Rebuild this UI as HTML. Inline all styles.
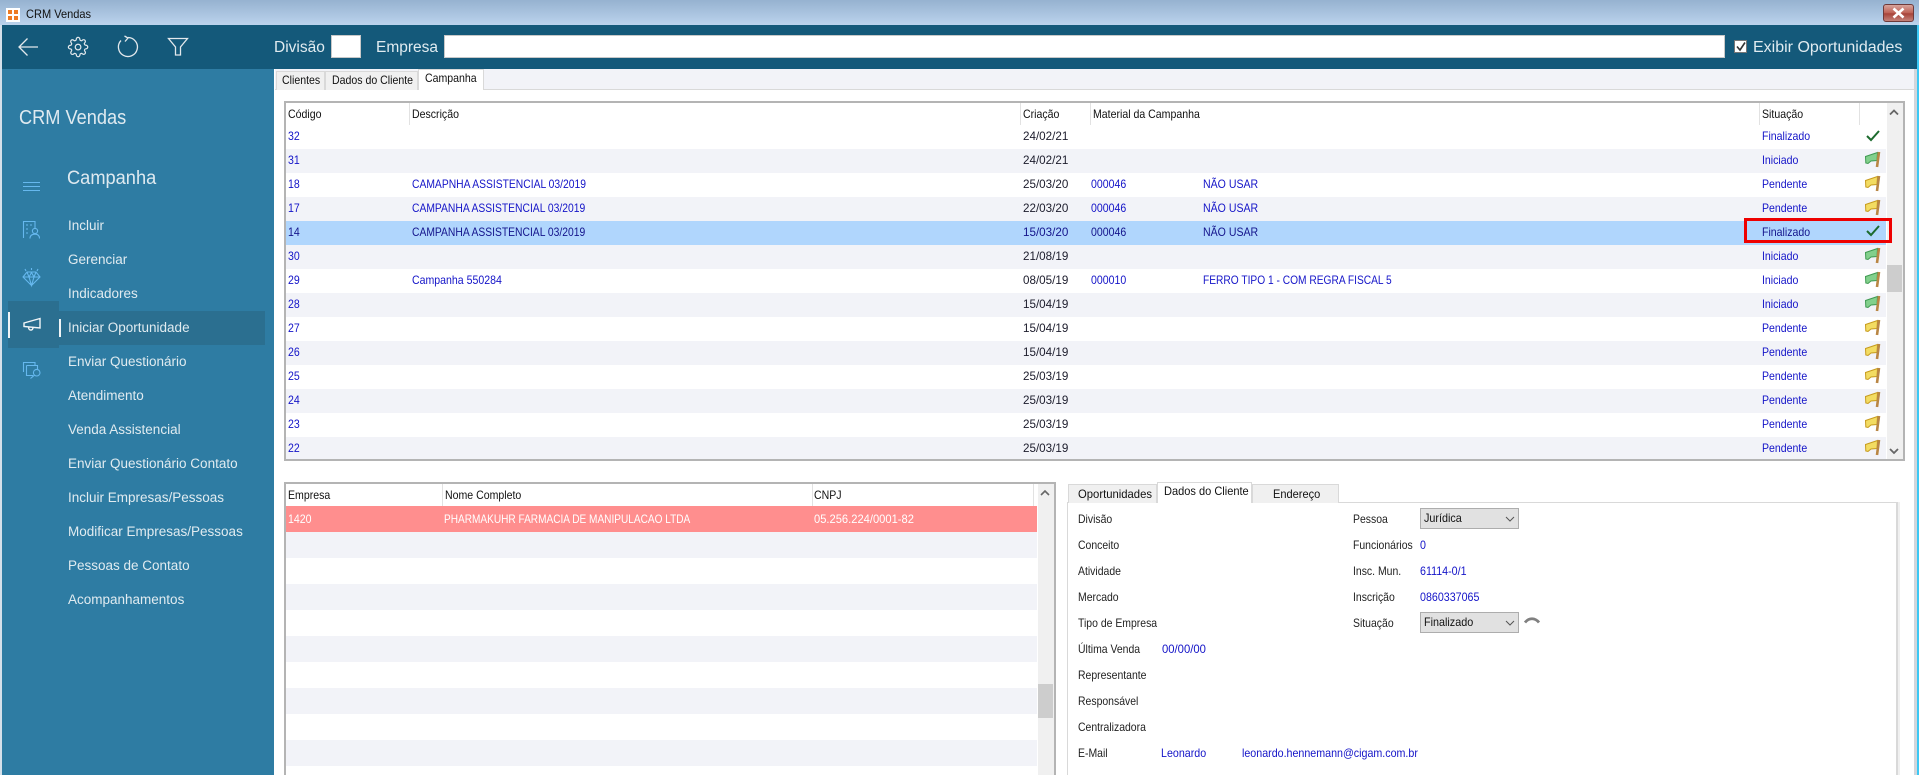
<!DOCTYPE html>
<html><head><meta charset="utf-8"><title>CRM Vendas</title>
<style>
html,body{margin:0;padding:0;width:1919px;height:775px;overflow:hidden;background:#fff;font-family:"Liberation Sans",sans-serif;font-size:12px;color:#111}
.b{position:absolute}
.a{position:absolute;white-space:nowrap}
.g{position:absolute;white-space:nowrap;transform:scaleX(.88);transform-origin:0 0}
.m{left:68px;color:#e0ebf0;font-size:13.5px;line-height:20px}
.r{position:absolute;left:286px;width:1600px;height:24px;line-height:22px;color:#1414c8}
.w{background:#fff}.z{background:#f2f3f8}
.c0{left:2px}.c1{left:126px}.c2{left:737px;color:#1c1c2c;transform:scaleX(.97)}.c3{left:805px}.c4{left:917px}.c5{left:1476px}
.h{top:106px;line-height:16px;color:#111}
.sep{position:absolute;width:1px;background:#e2e2e2}
.tab{position:absolute;box-sizing:border-box;border:1px solid #d9d9d9;border-bottom:none;background:#f0f0f0;line-height:17px;color:#111}
.tab span{position:absolute;white-space:nowrap;transform:scaleX(.88);transform-origin:0 0}
.l{position:absolute;left:1078px;line-height:16px;color:#222;white-space:nowrap;transform:scaleX(.87);transform-origin:0 0}
.v{position:absolute;line-height:16px;color:#1414c8;white-space:nowrap;transform:scaleX(.89);transform-origin:0 0}
.sel{position:absolute;left:1420px;width:99px;height:21px;box-sizing:border-box;border:1px solid #adadad;background:#e1e1e1;line-height:18px;color:#111}
.sel span{position:absolute;left:3px;white-space:nowrap;transform:scaleX(.9);transform-origin:0 0}
.q{position:absolute;left:286px;width:751px;height:26px}
</style></head><body>
<div class="b" style="left:0;top:0;width:1919px;height:25px;background:linear-gradient(#96b2d0,#bbd3ed)"></div>
<div class="a" style="left:26px;top:6px;line-height:16px;color:#111;transform:scaleX(.92);transform-origin:0 0">CRM Vendas</div>
<div class="b" style="left:0;top:25px;width:2px;height:750px;background:#d5e0ea"></div>
<div class="b" style="left:2px;top:25px;width:1915px;height:44px;background:#14597a"></div>
<div class="b" style="left:2px;top:69px;width:272px;height:706px;background:#2e7ca3"></div>
<div class="b" style="left:275px;top:69px;width:1639px;height:20px;background:#f2f3f8"></div>
<div class="b" style="left:275px;top:89px;width:1639px;height:1px;background:#d9d9d9"></div>
<div class="b" style="left:1914px;top:69px;width:3px;height:706px;background:#d2d6dc"></div>
<div class="b" style="left:1917px;top:25px;width:2px;height:750px;background:#3cc8f4"></div>

<div class="b" style="left:1883px;top:4px;width:31px;height:18px;box-sizing:border-box;border:1px solid #6e3a3a;border-radius:3px;background:linear-gradient(#d8a49c,#bf6458 48%,#a8443a 55%,#c4827a)"></div>

<div class="a" style="left:274px;top:38px;line-height:20px;font-size:15.5px;color:#e0ebf0">Divisão</div>
<div class="b" style="left:331px;top:35px;width:30px;height:23px;background:#fff;box-sizing:border-box;border:1px solid #c8c8c8"></div>
<div class="a" style="left:376px;top:38px;line-height:20px;font-size:15.5px;color:#e0ebf0">Empresa</div>
<div class="b" style="left:444px;top:35px;width:1281px;height:23px;background:#fff;box-sizing:border-box;border:1px solid #c8c8c8"></div>
<div class="b" style="left:1734px;top:40px;width:13px;height:13px;background:#fff;box-sizing:border-box;border:1px solid #777"></div>
<div class="a" style="left:1753px;top:38px;line-height:20px;font-size:16px;color:#e0ebf0">Exibir Oportunidades</div>

<div class="a" style="left:19px;top:106px;font-size:20px;line-height:24px;color:#dfeaf0;transform:scaleX(.91);transform-origin:0 0">CRM Vendas</div>
<div class="a" style="left:67px;top:167px;font-size:19px;line-height:24px;color:#dfeaf0;transform:scaleX(.96);transform-origin:0 0">Campanha</div>
<div class="b" style="left:8px;top:301px;width:51px;height:47px;background:#2b6f90"></div>
<div class="b" style="left:59px;top:311px;width:206px;height:34px;background:#2b6f90"></div>
<div class="b" style="left:8px;top:312px;width:1.5px;height:26px;background:#f0f4f6"></div>
<div class="b" style="left:59px;top:319px;width:1.5px;height:18px;background:#f0f4f6"></div>
<div class="a m" style="top:216px">Incluir</div>
<div class="a m" style="top:250px">Gerenciar</div>
<div class="a m" style="top:284px">Indicadores</div>
<div class="a m" style="top:318px">Iniciar Oportunidade</div>
<div class="a m" style="top:352px">Enviar Questionário</div>
<div class="a m" style="top:386px">Atendimento</div>
<div class="a m" style="top:420px">Venda Assistencial</div>
<div class="a m" style="top:454px">Enviar Questionário Contato</div>
<div class="a m" style="top:488px">Incluir Empresas/Pessoas</div>
<div class="a m" style="top:522px">Modificar Empresas/Pessoas</div>
<div class="a m" style="top:556px">Pessoas de Contato</div>
<div class="a m" style="top:590px">Acompanhamentos</div>

<div class="tab" style="left:276px;top:71px;width:49px;height:19px"><span style="left:5px;top:0">Clientes</span></div>
<div class="tab" style="left:325px;top:71px;width:93px;height:19px"><span style="left:6px;top:0">Dados do Cliente</span></div>
<div class="tab" style="left:418px;top:69px;width:66px;height:21px;background:#fff"><span style="left:6px;top:0">Campanha</span></div>

<div class="b" style="left:284px;top:101px;width:1621px;height:360px;box-sizing:border-box;border:2px solid #b4b4b4"></div>
<div class="b" style="left:1887px;top:103px;width:16px;height:356px;background:#f0f0f0"></div>
<div class="b" style="left:1887px;top:265px;width:15px;height:27px;background:#cdcdcd"></div>
<div class="g h" style="left:288px">Código</div>
<div class="g h" style="left:412px">Descrição</div>
<div class="g h" style="left:1023px">Criação</div>
<div class="g h" style="left:1093px">Material da Campanha</div>
<div class="g h" style="left:1762px">Situação</div>
<div class="sep" style="left:409px;top:103px;height:22px"></div>
<div class="sep" style="left:1020px;top:103px;height:22px"></div>
<div class="sep" style="left:1090px;top:103px;height:22px"></div>
<div class="sep" style="left:1759px;top:103px;height:22px"></div>
<div class="sep" style="left:1859px;top:103px;height:22px"></div>

<div class="r w" style="top:125px"><span class="g c0">32</span><span class="g c2">24/02/21</span><span class="g c5">Finalizado</span></div>
<div class="r z" style="top:149px"><span class="g c0">31</span><span class="g c2">24/02/21</span><span class="g c5">Iniciado</span></div>
<div class="r w" style="top:173px"><span class="g c0">18</span><span class="g c1" style="transform:scaleX(.86)">CAMAPNHA ASSISTENCIAL 03/2019</span><span class="g c2">25/03/20</span><span class="g c3">000046</span><span class="g c4">NÃO USAR</span><span class="g c5">Pendente</span></div>
<div class="r z" style="top:197px"><span class="g c0">17</span><span class="g c1" style="transform:scaleX(.86)">CAMPANHA ASSISTENCIAL 03/2019</span><span class="g c2">22/03/20</span><span class="g c3">000046</span><span class="g c4">NÃO USAR</span><span class="g c5">Pendente</span></div>
<div class="r" style="top:221px;background:#b0d6fd;color:#14148c"><span class="g c0">14</span><span class="g c1" style="transform:scaleX(.86)">CAMPANHA ASSISTENCIAL 03/2019</span><span class="g c2" style="color:#14148c">15/03/20</span><span class="g c3">000046</span><span class="g c4">NÃO USAR</span><span class="g c5">Finalizado</span></div>
<div class="r z" style="top:245px"><span class="g c0">30</span><span class="g c2">21/08/19</span><span class="g c5">Iniciado</span></div>
<div class="r w" style="top:269px"><span class="g c0">29</span><span class="g c1">Campanha 550284</span><span class="g c2">08/05/19</span><span class="g c3">000010</span><span class="g c4" style="transform:scaleX(.85)">FERRO TIPO 1 - COM REGRA FISCAL 5</span><span class="g c5">Iniciado</span></div>
<div class="r z" style="top:293px"><span class="g c0">28</span><span class="g c2">15/04/19</span><span class="g c5">Iniciado</span></div>
<div class="r w" style="top:317px"><span class="g c0">27</span><span class="g c2">15/04/19</span><span class="g c5">Pendente</span></div>
<div class="r z" style="top:341px"><span class="g c0">26</span><span class="g c2">15/04/19</span><span class="g c5">Pendente</span></div>
<div class="r w" style="top:365px"><span class="g c0">25</span><span class="g c2">25/03/19</span><span class="g c5">Pendente</span></div>
<div class="r z" style="top:389px"><span class="g c0">24</span><span class="g c2">25/03/19</span><span class="g c5">Pendente</span></div>
<div class="r w" style="top:413px"><span class="g c0">23</span><span class="g c2">25/03/19</span><span class="g c5">Pendente</span></div>
<div class="r z" style="top:437px;height:22px"><span class="g c0">22</span><span class="g c2">25/03/19</span><span class="g c5">Pendente</span></div>

<div class="b" style="left:1744px;top:218px;width:148px;height:25px;box-sizing:border-box;border:3px solid #ee0000"></div>

<div class="b" style="left:284px;top:482px;width:772px;height:293px;box-sizing:border-box;border:2px solid #b4b4b4;border-bottom:none"></div>
<div class="b" style="left:1038px;top:484px;width:16px;height:291px;background:#f0f0f0"></div>
<div class="b" style="left:1038px;top:684px;width:15px;height:34px;background:#cdcdcd"></div>
<div class="g" style="left:288px;top:487px;line-height:16px;color:#111">Empresa</div>
<div class="g" style="left:445px;top:487px;line-height:16px;color:#111">Nome Completo</div>
<div class="g" style="left:814px;top:487px;line-height:16px;color:#111">CNPJ</div>
<div class="sep" style="left:442px;top:484px;height:22px"></div>
<div class="sep" style="left:812px;top:484px;height:22px"></div>
<div class="sep" style="left:1033px;top:484px;height:22px"></div>
<div class="q" style="top:506px;background:#ff8e8e;color:#fff;line-height:26px">
<span class="g" style="left:2px">1420</span><span class="g" style="left:158px;transform:scaleX(.84)">PHARMAKUHR FARMACIA DE MANIPULACAO LTDA</span><span class="g" style="left:528px;transform:scaleX(.93)">05.256.224/0001-82</span></div>
<div class="q z" style="top:532px"></div>
<div class="q z" style="top:584px"></div>
<div class="q z" style="top:636px"></div>
<div class="q z" style="top:688px"></div>
<div class="q z" style="top:740px"></div>

<div class="b" style="left:1067px;top:502px;width:831px;height:273px;box-sizing:border-box;border:1px solid #d9d9d9;border-width:1px 2px 0 1px"></div>
<div class="b" style="left:1898px;top:502px;width:2px;height:273px;background:#f0f0f0"></div>
<div class="tab" style="left:1068px;top:484px;width:89px;height:19px"><span style="left:9px;top:1px;transform:scaleX(.94)">Oportunidades</span></div>
<div class="tab" style="left:1157px;top:482px;width:95px;height:21px;background:#fff"><span style="left:6px;top:0;transform:scaleX(.92)">Dados do Cliente</span></div>
<div class="tab" style="left:1252px;top:484px;width:87px;height:19px"><span style="left:20px;top:1px;transform:scaleX(.92)">Endereço</span></div>

<div class="l" style="top:511px">Divisão</div>
<div class="l" style="top:537px">Conceito</div>
<div class="l" style="top:563px">Atividade</div>
<div class="l" style="top:589px">Mercado</div>
<div class="l" style="top:615px">Tipo de Empresa</div>
<div class="l" style="top:641px">Última Venda</div>
<div class="l" style="top:667px">Representante</div>
<div class="l" style="top:693px">Responsável</div>
<div class="l" style="top:719px">Centralizadora</div>
<div class="l" style="top:745px">E-Mail</div>
<div class="v" style="left:1162px;top:641px;transform:scaleX(.94)">00/00/00</div>
<div class="v" style="left:1161px;top:745px">Leonardo</div>
<div class="v" style="left:1242px;top:745px">leonardo.hennemann@cigam.com.br</div>
<div class="l" style="left:1353px;top:511px">Pessoa</div>
<div class="l" style="left:1353px;top:537px">Funcionários</div>
<div class="l" style="left:1353px;top:563px">Insc. Mun.</div>
<div class="l" style="left:1353px;top:589px">Inscrição</div>
<div class="l" style="left:1353px;top:615px">Situação</div>
<div class="v" style="left:1420px;top:537px">0</div>
<div class="v" style="left:1420px;top:563px">61114-0/1</div>
<div class="v" style="left:1420px;top:589px">0860337065</div>
<div class="sel" style="top:508px"><span>Jurídica</span></div>
<div class="sel" style="top:612px"><span>Finalizado</span></div>

<svg class="b" style="left:0;top:0" width="1919" height="775" viewBox="0 0 1919 775" fill="none">
<defs>
<g id="fy"><path d="M.5 4.5L5 3L12.5 .5L12 8.5L6 9L3 11.5L.8 11Z" fill="#f3dc62" stroke="#c79b1e"/><path d="M14 0L12 15" stroke="#b98644" stroke-width="2.6"/></g>
<g id="fg"><path d="M.5 4.5L5 3L12.5 .5L12 8.5L6 9L3 11.5L.8 11Z" fill="#82d08c" stroke="#3f9a52"/><path d="M14 0L12 15" stroke="#b98644" stroke-width="2.6"/></g>
<path id="ck" d="M0 5L4 9L12 0" stroke="#1c6b2e" stroke-width="2"/>
</defs>
<rect x="6" y="8" width="14" height="14" fill="#fff"/>
<path d="M8 10h4v4h-4zM14 10h4v4h-4zM8 16h4v4h-4zM14 16h4v4h-4z" fill="#ee7a22"/>
<path d="M1893.5 8.5L1903.5 17.5M1903.5 8.5L1893.5 17.5" stroke="#fff" stroke-width="2.6"/>
<g stroke="#e2e8ec" stroke-width="1.3">
<path d="M38 47H19M27.5 38.5L19 47L27.5 55.5"/>
<g transform="translate(67.5 36.5) scale(.88)"><path stroke-width="1.4" d="M19.4 15a1.65 1.65 0 0 0 .33 1.82l.06.06a2 2 0 0 1 0 2.83 2 2 0 0 1-2.83 0l-.06-.06a1.65 1.65 0 0 0-1.82-.33 1.65 1.65 0 0 0-1 1.51V21a2 2 0 0 1-2 2 2 2 0 0 1-2-2v-.09A1.65 1.65 0 0 0 9 19.4a1.65 1.65 0 0 0-1.82.33l-.06.06a2 2 0 0 1-2.83 0 2 2 0 0 1 0-2.83l.06-.06a1.65 1.65 0 0 0 .33-1.82 1.65 1.65 0 0 0-1.51-1H3a2 2 0 0 1-2-2 2 2 0 0 1 2-2h.09A1.65 1.65 0 0 0 4.6 9a1.65 1.65 0 0 0-.33-1.82l-.06-.06a2 2 0 0 1 0-2.83 2 2 0 0 1 2.83 0l.06.06a1.65 1.65 0 0 0 1.82.33H9a1.65 1.65 0 0 0 1-1.51V3a2 2 0 0 1 2-2 2 2 0 0 1 2 2v.09a1.65 1.65 0 0 0 1 1.51 1.65 1.65 0 0 0 1.82-.33l.06-.06a2 2 0 0 1 2.83 0 2 2 0 0 1 0 2.83l-.06.06a1.65 1.65 0 0 0-.33 1.82V9a1.65 1.65 0 0 0 1.51 1H21a2 2 0 0 1 2 2 2 2 0 0 1-2 2h-.09a1.65 1.65 0 0 0-1.51 1z"/><circle cx="12" cy="12" r="3.2" stroke-width="1.4"/></g>
<path d="M128 37.5A9.5 9.5 0 1 1 121 40.5M124.5 36L128 38L125 41.5"/>
<path d="M168.5 38.5H187.5L180.5 47V55H175.5V47Z"/>
</g>
<path d="M1737 46.5L1740 50L1745 42.5" stroke="#333" stroke-width="1.6"/>
<g stroke="#66b8ee" stroke-width="1.1">
<path d="M23 182.5H40M23 186.5H40M23 190.5H40"/>
<path d="M23.5 238V221.5H35V228M26 225h2M30 225h2M26 229h2M26 233h2"/>
<circle cx="35" cy="231" r="2.6"/><path d="M30 238.5C30 235 32.5 234.2 35 234.2S39.5 235 39.5 238.5"/>
<path d="M27 272H36L40 277L31.5 285.5L23 277ZM23 277H40M27 272L29 277L31.5 285.5L34 277L36 272M29 277L31.5 272.5L34 277M31.5 268V270M25 269L26 271M38 269L37 271"/>
<path d="M23.5 372V362.5H35V365M26.5 365.5H37.5V369M26.5 365.5V375.5H33"/>
<circle cx="36.7" cy="372.7" r="3.3"/><path d="M34.3 375.3L30.5 378.5"/>
</g>
<path d="M24 323L40 318.5V328L24 326.5ZM28.5 327C28.5 331 33 331 33 327.5" stroke="#f2f6f8" stroke-width="1.4"/>
<path d="M1890 114.5L1894 110.5L1898 114.5M1890 449L1894 453L1898 449" stroke="#666" stroke-width="1.8"/>
<path d="M1041 495L1045 491L1049 495" stroke="#666" stroke-width="1.6"/>
<path d="M1506 517L1510 521L1514 517M1506 621L1510 625L1514 621" stroke="#555" stroke-width="1"/>
<path d="M1525 622.5C1529 617.5 1535 617.5 1539 622.5" stroke="#808080" stroke-width="2.8"/>
<use href="#ck" x="1867" y="131"/>
<use href="#fg" x="1865" y="152"/>
<use href="#fy" x="1865" y="176"/>
<use href="#fy" x="1865" y="200"/>
<use href="#ck" x="1867" y="226"/>
<use href="#fg" x="1865" y="248"/>
<use href="#fg" x="1865" y="272"/>
<use href="#fg" x="1865" y="296"/>
<use href="#fy" x="1865" y="320"/>
<use href="#fy" x="1865" y="344"/>
<use href="#fy" x="1865" y="368"/>
<use href="#fy" x="1865" y="392"/>
<use href="#fy" x="1865" y="416"/>
<use href="#fy" x="1865" y="440"/>
</svg>
</body></html>
